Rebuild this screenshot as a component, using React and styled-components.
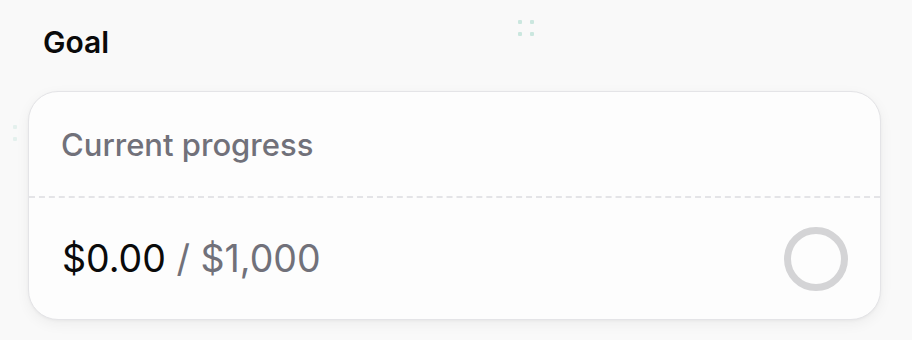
import React from 'react';
import styled, { createGlobalStyle } from 'styled-components';

const GlobalStyle = createGlobalStyle`
    html, body {
        margin: 0;
        padding: 0;
        background: #f9f9f9;
        font-family: Inter, "Liberation Sans", sans-serif;
        -webkit-font-smoothing: antialiased;
    }
`;

const Page = styled.div`
    position: relative;
    width: 912px;
    height: 340px;
    padding: 24px 31px 0 28px;
    box-sizing: border-box;
    overflow: hidden;
`;

const Handle = styled.div`
    position: absolute;
    left: ${(p) => p.x}px;
    top: ${(p) => p.y}px;
    display: grid;
    grid-template-columns: repeat(${(p) => p.cols}, 4px);
    gap: 8px;
    opacity: ${(p) => p.faint ? 0.45 : 1};

    span {
        width: 4px;
        height: 4px;
        border-radius: 1px;
        background: #cbe7df;
    }
`;

const Title = styled.h2`
    margin: 0 0 31px 15px;
    font-size: 30px;
    line-height: 36px;
    font-weight: 600;
    color: #0a0a0a;
`;

const Card = styled.div`
    background: #fdfdfd;
    border: 1.5px solid #e4e4e7;
    border-radius: 30px;
    box-shadow: 0 4px 14px rgba(0, 0, 0, 0.05), 0 1px 3px rgba(0, 0, 0, 0.04);
    overflow: hidden;
`;

const Header = styled.div`
    height: 104px;
    display: flex;
    align-items: center;
    padding: 0 32px;
    font-size: 31px;
    font-weight: 500;
    color: #71717a;
    border-bottom: 2px dashed #e4e4e7;
`;

const Body = styled.div`
    height: 121px;
    display: flex;
    align-items: center;
    justify-content: space-between;
    padding: 0 32px 0 33px;
`;

const Amount = styled.div`
    font-size: 37.5px;
    font-weight: 400;
    color: #0a0a0a;

    span {
        color: #71717a;
    }
`;

const Ring = () => (
    <svg width="64" height="64" viewBox="0 0 64 64">
        <circle cx="32" cy="32" r="28.5" fill="none" stroke="#d4d4d6" strokeWidth="7" />
    </svg>
);

const Dots = ({ x, y, cols, rows, faint }) => (
    <Handle x={x} y={y} cols={cols} faint={faint}>
        {Array.from({ length: cols * rows }).map((_, i) => <span key={i} />)}
    </Handle>
);

export default function App() {
    return (
        <Page>
            <GlobalStyle />
            <Dots x={518} y={20} cols={2} rows={2} />
            <Dots x={13} y={125} cols={1} rows={2} faint />
            <Title>Goal</Title>
            <Card>
                <Header>Current progress</Header>
                <Body>
                    <Amount>$0.00 <span>/ $1,000</span></Amount>
                    <Ring />
                </Body>
            </Card>
        </Page>
    );
}
